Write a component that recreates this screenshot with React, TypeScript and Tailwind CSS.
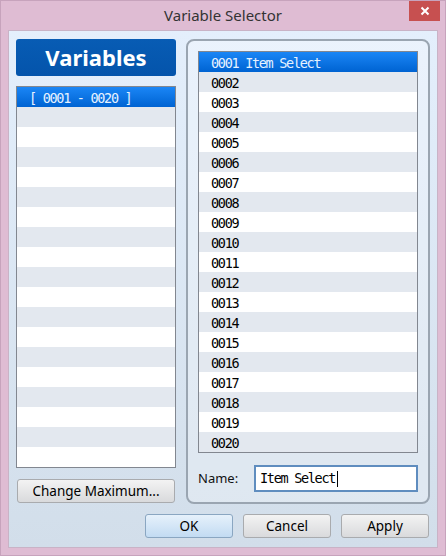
import React from "react";

const mono = { fontFamily: '"DejaVu Sans Mono", "Liberation Mono", monospace' };
const ui = { fontFamily: '"Noto Sans", "Open Sans", Arial, sans-serif' };

const varRows = Array.from({ length: 20 }, (_, i) => {
  const id = String(i + 1).padStart(4, "0");
  return i === 0 ? `${id} Item Select` : id;
});

function Row({ text, index, selected }: { text: string; index: number; selected?: boolean }) {
  const bg = selected
    ? "bg-gradient-to-b from-[#1a86f6] to-[#0063d2] text-[#e6f2ff]"
    : index % 2 === 1
    ? "bg-[#e3e8ef] text-black"
    : "bg-white text-black";
  return (
    <div
      className={`h-[20px] leading-[18px] pt-[2px] pl-[12px] text-[13.5px] tracking-[-1.3px] whitespace-pre ${bg}`}
      style={mono}
    >
      {text}
    </div>
  );
}

function Btn({ children, primary, className = "" }: { children: React.ReactNode; primary?: boolean; className?: string }) {
  return (
    <button
      className={`h-[24px] rounded-[3px] border text-[13.5px] text-black flex items-center justify-center ${
        primary
          ? "border-[#8aa6c1] bg-gradient-to-b from-[#e6f1fb] to-[#c2dbf2]"
          : "border-[#a9abae] bg-gradient-to-b from-[#f3f3f3] to-[#d9dadc]"
      } ${className}`}
      style={ui}
    >
      {children}
    </button>
  );
}

export default function App() {
  return (
    <div className="w-[446px] h-[556px] bg-[#dfbcd3] border border-[#c7a3bc] flex flex-col" style={ui}>
      {/* title bar */}
      <div className="h-[29px] relative flex items-center justify-center">
        <span className="text-[15px] text-[#333333] pb-[1px]">Variable Selector</span>
        <div className="absolute right-[5px] top-0 w-[31px] h-[20px] bg-[#c75050] flex items-center justify-center">
          <svg width="10" height="10" viewBox="0 0 10 10">
            <path d="M1.5 1.5 L8.5 8.5 M8.5 1.5 L1.5 8.5" stroke="white" strokeWidth="2" />
          </svg>
        </div>
      </div>

      {/* client area */}
      <div className="mx-[7px] mb-[7px] flex-1 border border-[#c9b3c6] bg-gradient-to-b from-[#e4effc] to-[#d2deea] flex flex-col pt-[8px] px-[7px]">
        <div className="flex gap-[10px]">
          {/* left column */}
          <div className="w-[160px] flex flex-col">
            <div className="h-[37px] rounded-[3px] bg-gradient-to-b from-[#085cb4] to-[#0454ab] flex items-center justify-center">
              <span className="text-white font-bold text-[22px] leading-none pb-[2px]">Variables</span>
            </div>
            <div className="mt-[10px] h-[382px] border border-[#828790] bg-white overflow-hidden">
              {Array.from({ length: 19 }, (_, i) => (
                <Row key={i} index={i} selected={i === 0} text={i === 0 ? "[ 0001 - 0020 ]" : ""} />
              ))}
            </div>
            <Btn className="mt-[11px] ml-[1px] w-[158px]">Change Maximum...</Btn>
          </div>

          {/* right group */}
          <div className="w-[244px] h-[465px] rounded-[8px] border-2 border-[#9aa5b1] bg-white/25 px-[10px] pt-[10px] flex flex-col">
            <div className="h-[402px] border border-[#828790] bg-white">
              {varRows.map((t, i) => (
                <Row key={i} index={i} selected={i === 0} text={t} />
              ))}
            </div>
            <div className="mt-[12px] flex items-center">
              <span className="w-[56px] text-[13px] text-[#111111]">Name:</span>
              <div className="w-[164px] h-[27px] border-2 border-[#5f8dbf] bg-white flex items-center pl-[4px]">
                <span className="text-[13.5px] tracking-[-1.3px] text-black" style={mono}>Item Select</span>
                <span className="w-[1px] h-[16px] bg-black ml-[2px]" />
              </div>
            </div>
          </div>
        </div>

        {/* dialog buttons */}
        <div className="mt-[10px] flex justify-end gap-[10px] pr-[1px]">
          <Btn primary className="w-[88px]">OK</Btn>
          <Btn className="w-[88px]">Cancel</Btn>
          <Btn className="w-[88px]">Apply</Btn>
        </div>
      </div>
    </div>
  );
}
